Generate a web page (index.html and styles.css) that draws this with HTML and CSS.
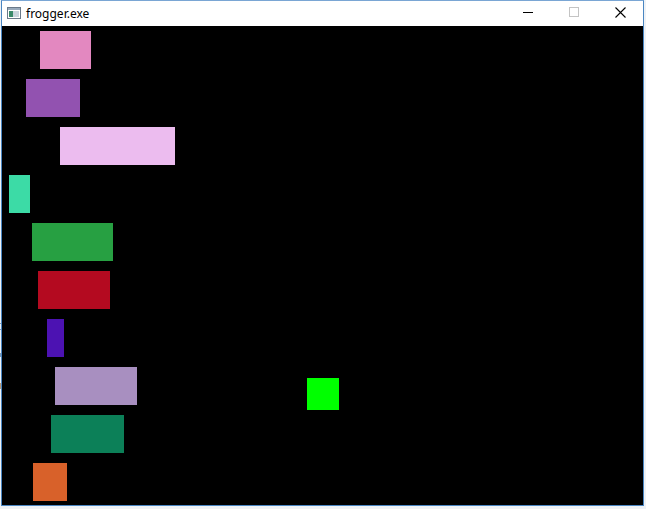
FILE: index.html
```html
<!DOCTYPE html>
<html>
<head>
<meta charset="utf-8">
<title>frogger.exe</title>
<link rel="stylesheet" href="styles.css">
</head>
<body>
<div class="window">
  <div class="titlebar">
    <svg class="appicon" width="14" height="12" viewBox="0 0 14 12">
      <rect x="0.5" y="0.5" width="13" height="11" fill="#fff" stroke="#6a7a8a"/>
      <rect x="1" y="1" width="12" height="2" fill="#9ab"/>
      <rect x="2" y="4" width="4" height="6" fill="#3a8a6a"/>
      <rect x="6" y="4" width="6" height="6" fill="#c8d4dc"/>
    </svg>
    <span class="title">frogger.exe</span>
    <div class="controls">
      <div class="ctl"><svg width="10" height="10" viewBox="0 0 10 10"><rect x="0" y="5" width="10" height="1" fill="#000"/></svg></div>
      <div class="ctl"><svg width="10" height="10" viewBox="0 0 10 10"><rect x="0.5" y="0.5" width="9" height="9" fill="none" stroke="#c4c4c4"/></svg></div>
      <div class="ctl"><svg width="11" height="11" viewBox="0 0 11 11"><path d="M0.5 0.5 L10.5 10.5 M10.5 0.5 L0.5 10.5" stroke="#000" stroke-width="1.1"/></svg></div>
    </div>
  </div>
  <div class="client">
    <div class="car" style="left:38px;top:5px;width:51px;height:38px;background:#e388c0"></div>
    <div class="car" style="left:24px;top:53px;width:54px;height:38px;background:#9252b0"></div>
    <div class="car" style="left:58px;top:101px;width:115px;height:38px;background:#ecbcef"></div>
    <div class="car" style="left:7px;top:149px;width:21px;height:38px;background:#3cdba6"></div>
    <div class="car" style="left:30px;top:197px;width:81px;height:38px;background:#27a042"></div>
    <div class="car" style="left:36px;top:245px;width:72px;height:38px;background:#b40a20"></div>
    <div class="car" style="left:45px;top:293px;width:17px;height:38px;background:#4c12b2"></div>
    <div class="car" style="left:53px;top:341px;width:82px;height:38px;background:#a88fc0"></div>
    <div class="car" style="left:49px;top:389px;width:73px;height:38px;background:#0c8058"></div>
    <div class="car" style="left:31px;top:437px;width:34px;height:38px;background:#d8612a"></div>
    <div class="frog" style="left:305px;top:352px;"></div>
  </div>
</div>
<div class="mark m1"></div>
<div class="mark m2"></div>
<div class="mark m3"></div>
<div class="mark m4"></div>
</body>
</html>
```
FILE: styles.css
```css
html, body {
  margin: 0;
  padding: 0;
}
body {
  width: 646px;
  height: 509px;
  background: #eef2f6;
  position: relative;
  overflow: hidden;
}
.window {
  margin-left: 1px;
  width: 641px;
  border: 1px solid #4a86c2;
  border-top-color: #7aa6d4;
  background: #fff;
}
.titlebar {
  height: 25px;
  display: flex;
  align-items: center;
  background: #fff;
  font-family: "Noto Sans", "Open Sans", sans-serif;
  font-size: 12px;
  color: #000;
}
.appicon {
  margin-left: 5px;
  margin-top: -1px;
}
.title {
  margin-left: 5px;
  margin-top: -1px;
}
.controls {
  margin-left: auto;
  display: flex;
  height: 100%;
}
.ctl {
  width: 46px;
  height: 100%;
  display: flex;
  align-items: center;
  justify-content: center;
}
.ctl svg {
  margin-top: -3px;
}
.client {
  position: relative;
  height: 479px;
  background: #000;
}
.car {
  position: absolute;
}
.frog {
  position: absolute;
  width: 32px;
  height: 32px;
  background: #00ff00;
}
.mark {
  position: absolute;
  left: 0;
  width: 1px;
  background: #7a98b8;
}
.m1 { top: 323px; height: 1px; }
.m2 { top: 329px; height: 1px; }
.m3 { top: 353px; height: 4px; }
.m4 { top: 383px; height: 6px; background: #b89a7a; }
```
